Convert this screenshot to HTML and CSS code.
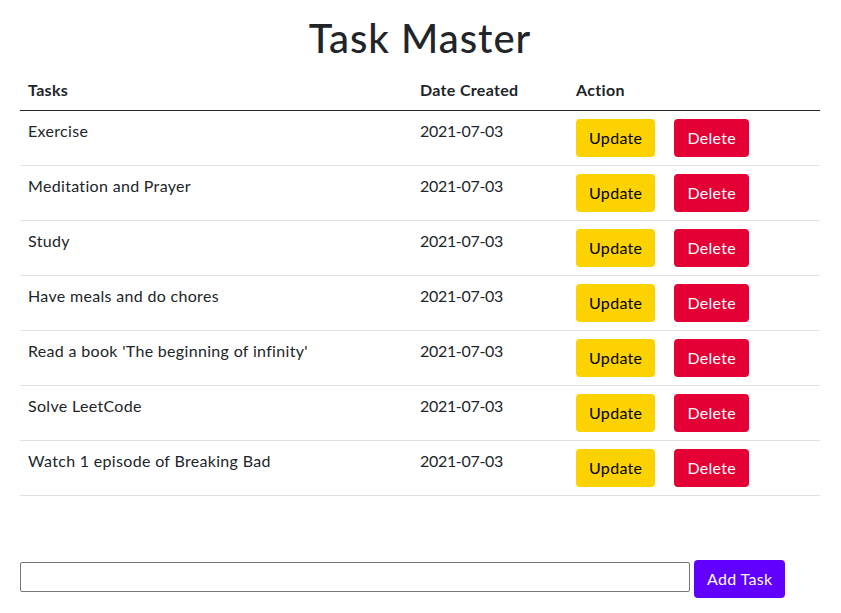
FILE: index.html
```html
<!DOCTYPE html>
<html lang="en">
<head>
<meta charset="utf-8">
<title>Task Master</title>
<link rel="stylesheet" href="styles.css">
</head>
<body>
<div class="container">
  <h1 class="title">Task Master</h1>
  <table class="tasks">
    <thead>
      <tr>
        <th class="col-task">Tasks</th>
        <th class="col-date">Date Created</th>
        <th class="col-action">Action</th>
      </tr>
    </thead>
    <tbody>
      <tr><td>Exercise</td><td class="date">2021-07-03</td><td><a class="btn btn-update">Update</a><a class="btn btn-delete">Delete</a></td></tr>
      <tr><td>Meditation and Prayer</td><td class="date">2021-07-03</td><td><a class="btn btn-update">Update</a><a class="btn btn-delete">Delete</a></td></tr>
      <tr><td>Study</td><td class="date">2021-07-03</td><td><a class="btn btn-update">Update</a><a class="btn btn-delete">Delete</a></td></tr>
      <tr><td>Have meals and do chores</td><td class="date">2021-07-03</td><td><a class="btn btn-update">Update</a><a class="btn btn-delete">Delete</a></td></tr>
      <tr><td>Read a book 'The beginning of infinity'</td><td class="date">2021-07-03</td><td><a class="btn btn-update">Update</a><a class="btn btn-delete">Delete</a></td></tr>
      <tr><td>Solve LeetCode</td><td class="date">2021-07-03</td><td><a class="btn btn-update">Update</a><a class="btn btn-delete">Delete</a></td></tr>
      <tr><td>Watch 1 episode of Breaking Bad</td><td class="date">2021-07-03</td><td><a class="btn btn-update">Update</a><a class="btn btn-delete">Delete</a></td></tr>
    </tbody>
  </table>
  <form class="add-form">
    <input class="add-input" type="text" name="content">
    <button class="btn btn-add" type="button">Add Task</button>
  </form>
</div>
</body>
</html>
```

FILE: styles.css
```css
html, body {
  margin: 0;
  padding: 0;
  background: #ffffff;
}
body {
  font-family: Lato, "Noto Sans", sans-serif;
  font-size: 16px;
  line-height: 24px;
  letter-spacing: 0.02em;
  color: #212529;
}
.container {
  width: 800px;
  margin-left: 20px;
}
.title {
  font-size: 40px;
  line-height: 48px;
  font-weight: 500;
  letter-spacing: 0.025em;
  text-align: center;
  margin: 14px 0 8px;
}
.tasks {
  width: 800px;
  border-collapse: collapse;
}
.tasks th {
  text-align: left;
  font-weight: 700;
  padding: 8px;
  border-bottom: 1px solid #212529;
}
.tasks td {
  vertical-align: top;
  padding: 8px;
  border-bottom: 1px solid #dee2e6;
}
.tasks td.date {
  letter-spacing: -0.02em;
}
.col-task { width: 376px; }
.col-date { width: 140px; }
.btn {
  display: inline-block;
  font-family: inherit;
  font-size: 16px;
  line-height: 24px;
  letter-spacing: 0.02em;
  padding: 6px 12px;
  border: 1px solid transparent;
  border-radius: 4px;
  cursor: pointer;
}
.btn-update {
  background: #fcd200;
  color: #000000;
  margin-right: 19px;
}
.btn-delete {
  background: #e40035;
  color: #ffffff;
}
.add-form {
  display: flex;
  align-items: flex-start;
  gap: 4px;
  margin-top: 64px;
}
.add-input {
  width: 670px;
  height: 30px;
  box-sizing: border-box;
  margin-top: 2px;
  border: 1px solid #767676;
  border-radius: 2px;
  padding: 1px 2px;
  font-family: inherit;
  font-size: 16px;
}
.btn-add {
  background: #6200ff;
  color: #ffffff;
}
```
